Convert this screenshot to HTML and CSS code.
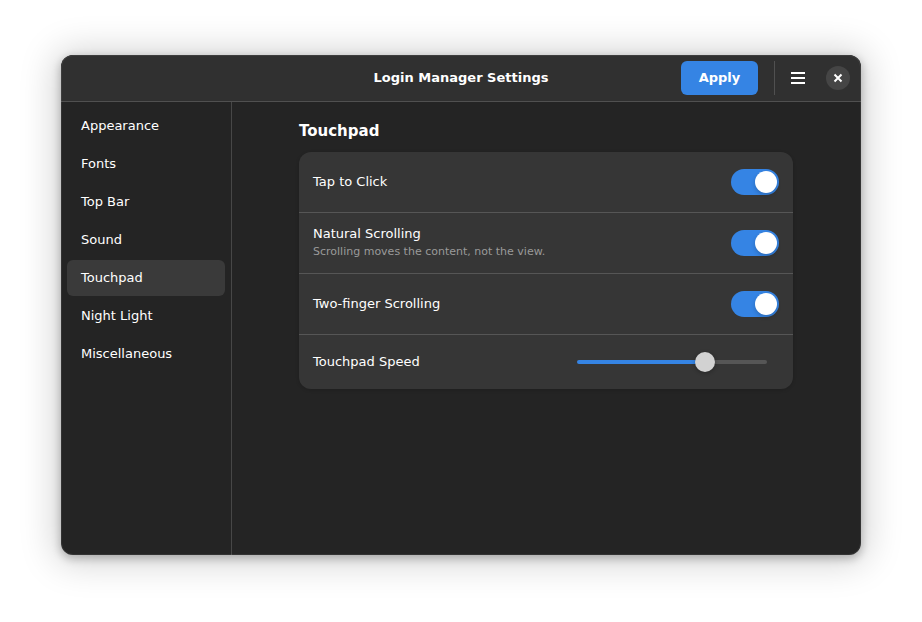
FILE: index.html
```html
<!DOCTYPE html>
<html lang="en">
<head>
<meta charset="utf-8">
<title>Login Manager Settings</title>
<link rel="stylesheet" href="styles.css">
</head>
<body>
<div class="window">
  <header class="headerbar">
    <h1 class="title">Login Manager Settings</h1>
    <div class="actions">
      <button class="apply" type="button">Apply</button>
      <span class="separator"></span>
      <button class="menu" type="button" aria-label="Main menu">
        <svg width="16" height="16" viewBox="0 0 16 16" fill="#fff"><path d="M1 2h14v2H1zM1 7h14v2H1zM1 12h14v2H1z"/></svg>
      </button>
      <button class="close" type="button" aria-label="Close">
        <svg width="16" height="16" viewBox="0 0 16 16" fill="none" stroke="#fff" stroke-width="2"><path d="M4.500 4.500l7 7M11.500 4.500l-7 7"/></svg>
      </button>
    </div>
  </header>
  <div class="body">
    <nav class="sidebar">
      <a href="#appearance">Appearance</a>
      <a href="#fonts">Fonts</a>
      <a href="#top-bar">Top Bar</a>
      <a href="#sound">Sound</a>
      <a href="#touchpad" class="selected" aria-current="page">Touchpad</a>
      <a href="#night-light">Night Light</a>
      <a href="#misc">Miscellaneous</a>
    </nav>
    <main class="content">
      <section class="group">
        <h2 class="group-title">Touchpad</h2>
        <div class="card">
          <div class="row">
            <label for="tap">Tap to Click</label>
            <input class="switch" id="tap" type="checkbox" role="switch" checked>
          </div>
          <div class="row">
            <label for="natural">Natural Scrolling<small>Scrolling moves the content, not the view.</small></label>
            <input class="switch" id="natural" type="checkbox" role="switch" checked>
          </div>
          <div class="row">
            <label for="two-finger">Two-finger Scrolling</label>
            <input class="switch" id="two-finger" type="checkbox" role="switch" checked>
          </div>
          <div class="row row-slider">
            <label for="speed">Touchpad Speed</label>
            <input class="slider" id="speed" type="range" min="0" max="170" value="118">
          </div>
        </div>
      </section>
    </main>
  </div>
</div>
</body>
</html>
```

FILE: styles.css
```css
* {
  box-sizing: border-box;
}

body {
  margin: 0;
  min-height: 100vh;
  padding: 55px 61px 67px;
  display: flex;
  background: #fff;
  color: #fff;
  font: 13px/18px "DejaVu Sans", sans-serif;
}

.window {
  flex: 1;
  display: flex;
  flex-direction: column;
  overflow: hidden;
  border-radius: 12px;
  background: #242424;
  outline: 1px solid rgba(255, 255, 255, 0.07);
  outline-offset: -1px;
  box-shadow: 0 3px 9px 1px rgba(0, 0, 0, 0.23), 0 2px 36px 6px rgba(0, 0, 0, 0.18);
}

.headerbar {
  display: grid;
  grid-template-columns: 1fr auto 1fr;
  align-items: center;
  padding: 6px 11px;
  border-bottom: 1px solid #505050;
  background: #303030;
}

.title {
  grid-column: 2;
  margin: 0;
  font-size: 13px;
  font-weight: bold;
}

.actions {
  display: flex;
  align-items: center;
  justify-content: flex-end;
}

button {
  display: grid;
  place-items: center;
  padding: 0;
  border: 0;
  background: none;
  color: inherit;
  font: inherit;
}

.apply {
  min-width: 77px;
  height: 34px;
  padding: 0 17px;
  border-radius: 6px;
  background: #3584e4;
  font-weight: bold;
}

.separator {
  width: 1px;
  height: 34px;
  margin: 0 6px 0 16px;
  background: #505050;
}

.menu {
  width: 34px;
  height: 34px;
}

.close {
  width: 24px;
  height: 24px;
  margin-left: 11px;
  border-radius: 50%;
  background: #454545;
}

.body {
  flex: 1;
  display: flex;
}

.sidebar {
  display: flex;
  flex-direction: column;
  gap: 2px;
  width: 171px;
  padding: 6px;
  border-right: 1px solid #474747;
}

.sidebar a {
  padding: 9px 14px;
  border-radius: 6px;
  color: inherit;
  text-decoration: none;
}

.sidebar .selected {
  background: #3a3a3a;
}

.content {
  flex: 1;
  padding: 20px 13px 20px 12px;
}

.group {
  max-width: 494px;
  margin: 0 auto;
}

.group-title {
  margin: 0 0 12px;
  font-size: 15px;
  font-weight: bold;
}

.card {
  overflow: hidden;
  border-radius: 12px;
  background: #363636;
  box-shadow: 0 1px 3px 1px rgba(0, 0, 0, 0.1);
}

.row {
  display: flex;
  align-items: center;
  justify-content: space-between;
  min-height: 60px;
  padding: 8px 14px;
}

.row + .row {
  min-height: 61px;
  border-top: 1px solid #565656;
}

.row + .row-slider {
  min-height: 55px;
  padding-right: 26px;
}

.row small {
  display: block;
  color: #9a9a9a;
  font-size: 11px;
}

.switch {
  appearance: none;
  display: flex;
  justify-content: flex-end;
  width: 48px;
  height: 26px;
  margin: 0;
  padding: 2px;
  border-radius: 13px;
  background: #3584e4;
}

.switch::before {
  content: "";
  width: 22px;
  height: 22px;
  border-radius: 50%;
  background: #fff;
  box-shadow: 0 2px 4px rgba(0, 0, 0, 0.2);
}

.switch:not(:checked) {
  justify-content: flex-start;
  background: #565656;
}

.slider {
  appearance: none;
  width: 190px;
  height: 20px;
  margin: 0;
  background: none;
}

.slider::-webkit-slider-runnable-track {
  height: 4px;
  border-radius: 2px;
  background: linear-gradient(to right, #3584e4 67%, #565656 67%);
}

.slider::-webkit-slider-thumb {
  appearance: none;
  width: 20px;
  height: 20px;
  margin-top: -8px;
  border-radius: 50%;
  background: #d2d2d2;
  box-shadow: 0 1px 4px rgba(0, 0, 0, 0.3);
}
```
